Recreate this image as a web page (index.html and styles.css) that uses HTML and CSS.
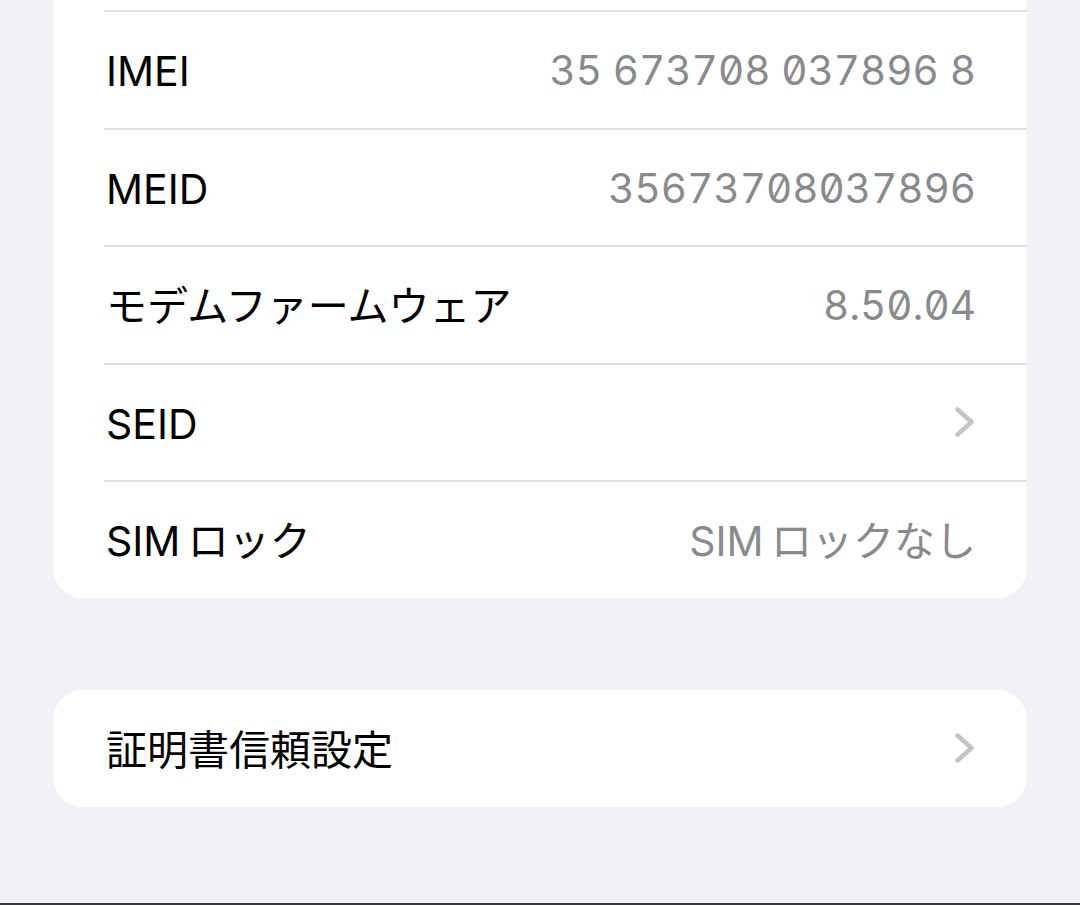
FILE: index.html
```html
<!DOCTYPE html>
<html lang="ja">
<head>
  <meta charset="UTF-8">
  <meta name="viewport" content="width=device-width, initial-scale=1.0">
  <title>情報</title>
  <link rel="stylesheet" href="styles.css">
</head>
<body>
  <div class="page">
    <div class="group group-cut">
      <div class="group-top"></div>
      <div class="row">
        <span class="label">IMEI</span>
        <span class="value num">35 673708 037896 8</span>
      </div>
      <div class="row">
        <span class="label">MEID</span>
        <span class="value num">35673708037896</span>
      </div>
      <div class="row">
        <span class="label">モデムファームウェア</span>
        <span class="value num">8.50.04</span>
      </div>
      <div class="row">
        <span class="label">SEID</span>
        <svg class="chevron" viewBox="0 0 20 30" width="20" height="30">
          <path d="M2.5 2.5 L16.5 15 L2.5 27.5" />
        </svg>
      </div>
      <div class="row">
        <span class="label">SIM&#8201;ロック</span>
        <span class="value">SIM&#8201;ロックなし</span>
      </div>
    </div>

    <div class="group">
      <div class="row row-first">
        <span class="label">証明書信頼設定</span>
        <svg class="chevron" viewBox="0 0 20 30" width="20" height="30">
          <path d="M2.5 2.5 L16.5 15 L2.5 27.5" />
        </svg>
      </div>
    </div>
  </div>
  <div class="edge"></div>
</body>
</html>
```

FILE: styles.css
```css
/* styles.css */
body {
    font-family: Inter, "Noto Sans CJK JP", sans-serif;
    margin: 0;
    padding: 0;
    background-color: #f2f1f6;
    min-height: 100vh;
    display: flex;
    flex-direction: column;
}

.page {
    padding: 0 53px;
}

.group {
    background-color: #fff;
    border-radius: 30px;
    margin-top: 92px;
}

.group-cut {
    margin-top: 0;
    border-radius: 0 0 30px 30px;
}

.group-top {
    height: 10px;
}

.row {
    box-sizing: border-box;
    height: 117.5px;
    margin-left: 51px;
    padding-top: 3px;
    padding-right: 52px;
    border-top: 2px solid #dfdfe3;
    display: flex;
    align-items: center;
    justify-content: space-between;
}

.row-first {
    border-top: none;
    height: 117px;
}

.label {
    font-size: 41px;
    line-height: 50px;
    color: #000;
    padding-left: 2px;
}

.value {
    font-size: 41px;
    line-height: 50px;
    color: #8a8a8e;
    margin-right: -1px;
}

.num {
    font-size: 40.5px;
    font-feature-settings: "tnum" 1, "zero" 1;
}

.chevron {
    display: block;
    fill: none;
    stroke: #c4c4c7;
    stroke-width: 4.5;
    stroke-linecap: round;
    stroke-linejoin: round;
    margin-top: -3px;
}

.edge {
    margin-top: auto;
    height: 2px;
    background-color: #3a3a3c;
}
```
